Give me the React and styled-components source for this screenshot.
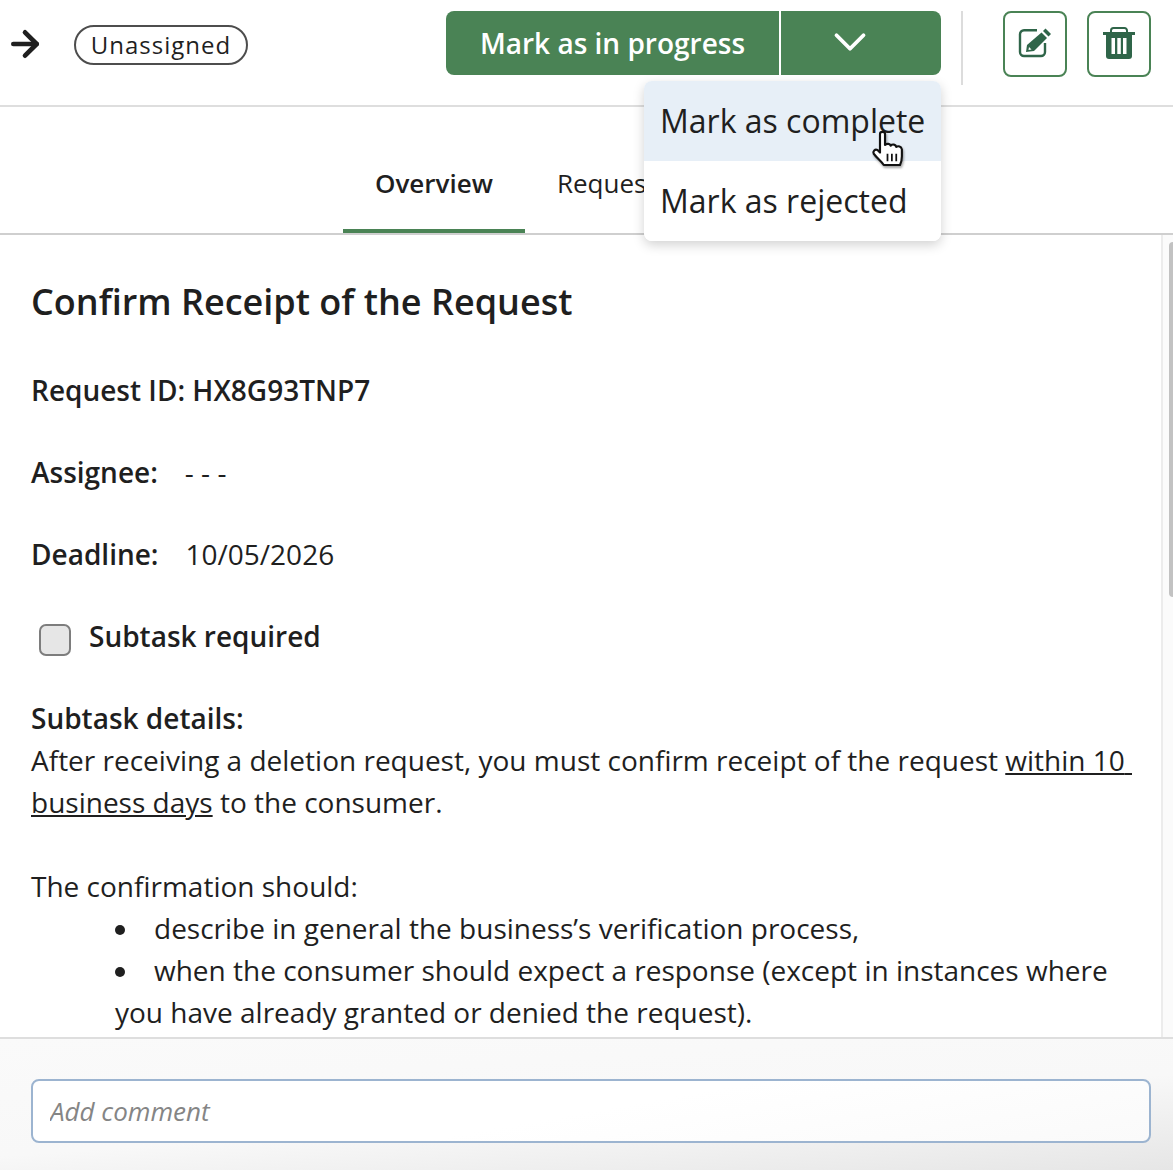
import styled, { createGlobalStyle } from "styled-components";
import { ArrowRight, ChevronDown } from "lucide-react";

const GlobalStyle = createGlobalStyle`
  html, body {
    margin: 0;
    padding: 0;
    background: #fff;
    overflow: hidden;
  }
  * {
    box-sizing: border-box;
  }
`;

const Page = styled.div`
  position: relative;
  display: flex;
  flex-direction: column;
  width: 1173px;
  height: 1170px;
  overflow: hidden;
  font-family: "Open Sans", sans-serif;
  color: #1f1f1f;
`;

const Toolbar = styled.header`
  display: flex;
  align-items: flex-start;
  flex: 0 0 107px;
  padding: 11px 22px 0 5px;
  border-bottom: 2px solid #dedede;
`;

const BackIcon = styled(ArrowRight)`
  flex: none;
  margin-top: 13px;
  color: #1f1f1f;
`;

const StatusBadge = styled.span`
  display: flex;
  align-items: center;
  justify-content: center;
  width: 174px;
  height: 40px;
  margin: 14px 0 0 29px;
  padding-bottom: 2px;
  border: 2px solid #4d4d4d;
  border-radius: 20px;
  font-size: 24px;
  letter-spacing: 1px;
`;

const SplitButton = styled.div`
  display: flex;
  width: 495px;
  height: 64px;
  margin-left: auto;
  border-radius: 8px;
  overflow: hidden;
  background: #4a8355;
  color: #fff;
`;

const MainAction = styled.button`
  flex: 0 0 335px;
  border: none;
  border-right: 2px solid #fff;
  background: none;
  color: inherit;
  font: 600 28px "Open Sans", sans-serif;
`;

const CaretAction = styled.button`
  display: flex;
  flex: 1;
  align-items: center;
  justify-content: center;
  padding: 0 22px 3px 0;
  border: none;
  background: none;
  color: inherit;
`;

const Separator = styled.div`
  flex: none;
  width: 2px;
  height: 74px;
  margin: 0 40px 0 20px;
  background: #dcdcdc;
`;

const IconButton = styled.button`
  display: flex;
  align-items: center;
  justify-content: center;
  flex: none;
  width: 64px;
  height: 66px;
  margin-left: ${(p) => (p.$spaced ? "20px" : "0")};
  padding: 0 0 ${(p) => (p.$spaced ? "2px" : "3px")};
  border: 2px solid #4a8355;
  border-radius: 8px;
  background: #fff;
  color: #2f6549;
`;

const Tabs = styled.nav`
  display: flex;
  flex: 0 0 128px;
  align-items: flex-end;
  padding-left: 343px;
  border-bottom: 2px solid #cfcfcf;
`;

const Tab = styled.a`
  display: flex;
  justify-content: center;
  height: 78px;
  padding: 7px 32px 0;
  border-bottom: 4px solid ${(p) => (p.$active ? "#4a8355" : "transparent")};
  font-size: 26px;
  font-weight: ${(p) => (p.$active ? 600 : 400)};
  line-height: 42px;
  white-space: nowrap;
`;

const Main = styled.div`
  display: flex;
  flex: 1;
  min-height: 0;
`;

const Content = styled.main`
  flex: 1;
  min-width: 0;
  padding: 41px 0 0 31px;
  font-size: 28px;
  line-height: 42px;
  overflow: hidden;
`;

const Heading = styled.h1`
  margin: 0 0 41px;
  font-size: 36px;
  font-weight: 600;
  line-height: 52px;
`;

const Field = styled.div`
  display: flex;
  align-items: center;
  height: 42px;
  margin-bottom: 40px;
  font-weight: 600;
`;

const FieldValue = styled.span`
  margin-left: 27px;
  font-weight: 400;
`;

const CheckRow = styled(Field)`
  padding-left: 8px;
`;

const CheckBox = styled.span`
  flex: none;
  width: 32px;
  height: 32px;
  margin: 7px 18px 0 0;
  border: 2px solid #7d7d7d;
  border-radius: 7px;
  background: #e6e6e6;
`;

const Strong = styled.div`
  font-weight: 600;
`;

const Paragraph = styled.p`
  margin: 0 0 42px;
`;

const Lead = styled.div``;

const BulletList = styled.ul`
  margin: 0;
  padding: 0 32px 0 84px;
  list-style: none;
`;

const Bullet = styled.li`
  &::before {
    content: "";
    display: inline-block;
    width: 10px;
    height: 10px;
    margin-right: 29px;
    border-radius: 50%;
    background: #1f1f1f;
    vertical-align: 4px;
  }
`;

const ScrollTrack = styled.div`
  flex: 0 0 12px;
  padding-top: 7px;
  border-left: 2px solid #ececec;
  background: #fbfbfb;
`;

const ScrollThumb = styled.div`
  width: 4px;
  height: 355px;
  margin-left: 6px;
  border-radius: 4px 0 0 4px;
  background: #c2c2c2;
`;

const Footer = styled.footer`
  flex: 0 0 133px;
  padding: 40px 22px 0 31px;
  border-top: 2px solid #dedede;
  background: linear-gradient(176deg, #fafafa 0%, #f8f8f8 55%, #e6e6e6 100%);
`;

const CommentInput = styled.input`
  display: block;
  width: 100%;
  height: 64px;
  padding: 0 17px;
  border: 2px solid #9cb4d0;
  border-radius: 8px;
  outline: none;
  background: linear-gradient(170deg, #fff 50%, #fafafa 100%);
  font: 26px "Open Sans", sans-serif;
  &::placeholder {
    color: #858585;
    font-style: italic;
    opacity: 1;
  }
`;

const Menu = styled.div`
  position: absolute;
  top: 81px;
  left: 644px;
  width: 297px;
  border-radius: 8px;
  overflow: hidden;
  background: #fff;
  box-shadow: 0 4px 12px rgba(0, 0, 0, 0.18);
`;

const MenuItem = styled.div`
  height: 80px;
  padding: 0 16px;
  background: ${(p) => (p.$hover ? "#e7eff7" : "#fff")};
  font-size: 32px;
  line-height: 80px;
  white-space: nowrap;
`;

const Pointer = styled.svg`
  position: absolute;
  top: 130px;
  left: 870px;
  filter: drop-shadow(1px 2px 1px rgba(0, 0, 0, 0.35));
`;

function EditIcon() {
  return (
    <svg width="34" height="30" viewBox="0 0 34 30" fill="currentColor">
      <path
        d="M19 2.200H6a4 4 0 0 0-4 4V24a4 4 0 0 0 4 4h17a4 4 0 0 0 4-4v-9"
        fill="none"
        stroke="currentColor"
        strokeWidth="2.400"
      />
      <path d="M8 24l1-7L23.500 4.500l5.500 5.500L16 23z" />
      <path d="M25 3l2.500-2.500 5.500 5.500L30.500 8.500z" />
      <path d="M10.500 22l.5-3 2.500 2.500z" fill="#fff" />
    </svg>
  );
}

function TrashIcon() {
  return (
    <svg width="32" height="32" viewBox="0 0 32 32" fill="currentColor">
      <path d="M8 6V3.500A2.500 2.500 0 0 1 10.500 1h11A2.500 2.500 0 0 1 24 3.500V6" fill="none" stroke="currentColor" strokeWidth="2" />
      <rect x="0" y="5" width="32" height="3" />
      <path d="M3 8h26v21a3 3 0 0 1-3 3H6a3 3 0 0 1-3-3z" />
      <rect x="8.500" y="11" width="3.500" height="16" fill="#fff" />
      <rect x="14.300" y="11" width="3.500" height="16" fill="#fff" />
      <rect x="20" y="11" width="3.500" height="16" fill="#fff" />
    </svg>
  );
}

export default function App() {
  return (
    <Page>
      <GlobalStyle />
      <Toolbar>
        <BackIcon size={40} strokeWidth={2.8} />
        <StatusBadge>Unassigned</StatusBadge>
        <SplitButton>
          <MainAction>Mark as in progress</MainAction>
          <CaretAction>
            <ChevronDown size={54} strokeWidth={1.7} />
          </CaretAction>
        </SplitButton>
        <Separator />
        <IconButton>
          <EditIcon />
        </IconButton>
        <IconButton $spaced>
          <TrashIcon />
        </IconButton>
      </Toolbar>
      <Tabs>
        <Tab $active>Overview</Tab>
        <Tab>Request details</Tab>
      </Tabs>
      <Main>
        <Content>
          <Heading>Confirm Receipt of the Request</Heading>
          <Field>Request ID: HX8G93TNP7</Field>
          <Field>
            Assignee:<FieldValue>- - -</FieldValue>
          </Field>
          <Field>
            Deadline:<FieldValue>10/05/2026</FieldValue>
          </Field>
          <CheckRow>
            <CheckBox />
            Subtask required
          </CheckRow>
          <Strong>Subtask details:</Strong>
          <Paragraph>
            After receiving a deletion request, you must confirm receipt of the request{" "}
            <u>
              within 10{"\u00a0"}
              <wbr />
              business days
            </u>{" "}
            to the consumer.
          </Paragraph>
          <Lead>The confirmation should:</Lead>
          <BulletList>
            <Bullet>describe in general the business’s verification process,</Bullet>
            <Bullet>
              when the consumer should expect a response (except in instances where you have
              already granted or denied the request).
            </Bullet>
          </BulletList>
        </Content>
        <ScrollTrack>
          <ScrollThumb />
        </ScrollTrack>
      </Main>
      <Footer>
        <CommentInput placeholder="Add comment" />
      </Footer>
      <Menu>
        <MenuItem $hover>Mark as complete</MenuItem>
        <MenuItem>Mark as rejected</MenuItem>
      </Menu>
      <Pointer width="40" height="45" viewBox="0 0 32 36">
        <path
          d="M8 3C8 1 12 1 12 3L12 12C13.500 10.500 16 11 16.500 12.500C18 11 20.500 11.500 21 13.500C22.500 12.500 25 13 25.500 15.500L25.500 21C25.500 24 25 26 24 28L11 28C9 25 6 23 3 19C2 17 4 15 6 16L8 18Z"
          fill="#fff"
          stroke="#111"
          strokeWidth="1.700"
          strokeLinejoin="round"
        />
        <path d="M14 19V25M17.500 19V25M21 19V25" stroke="#111" strokeWidth="1.400" />
      </Pointer>
    </Page>
  );
}
